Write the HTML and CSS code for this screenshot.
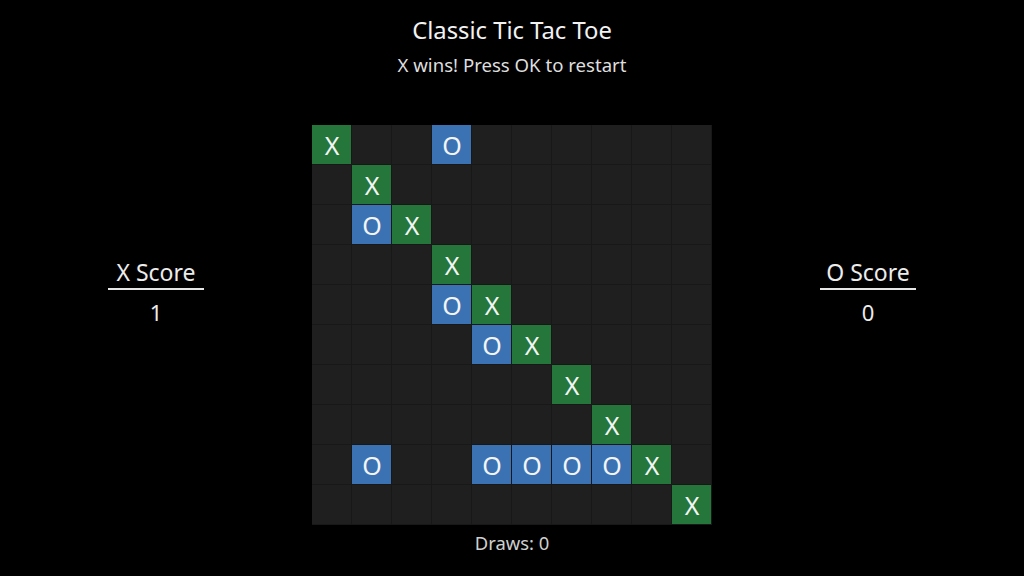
FILE: index.html
```html
<!DOCTYPE html>
<html lang="en">
<head>
<meta charset="utf-8">
<title>Classic Tic Tac Toe</title>
<link rel="stylesheet" href="styles.css">
</head>
<body>
<div class="page">
  <header class="header">
    <h1 class="title">Classic Tic Tac Toe</h1>
    <p class="status">X wins! Press OK to restart</p>
  </header>
  <main class="game">
    <section class="score">
      <div class="score-label">X Score</div>
      <div class="score-value">1</div>
    </section>
    <div class="board-wrap">
      <div class="board">
        <div class="cell x">X</div><div class="cell"></div><div class="cell"></div><div class="cell o">O</div><div class="cell"></div><div class="cell"></div><div class="cell"></div><div class="cell"></div><div class="cell"></div><div class="cell"></div>
        <div class="cell"></div><div class="cell x">X</div><div class="cell"></div><div class="cell"></div><div class="cell"></div><div class="cell"></div><div class="cell"></div><div class="cell"></div><div class="cell"></div><div class="cell"></div>
        <div class="cell"></div><div class="cell o">O</div><div class="cell x">X</div><div class="cell"></div><div class="cell"></div><div class="cell"></div><div class="cell"></div><div class="cell"></div><div class="cell"></div><div class="cell"></div>
        <div class="cell"></div><div class="cell"></div><div class="cell"></div><div class="cell x">X</div><div class="cell"></div><div class="cell"></div><div class="cell"></div><div class="cell"></div><div class="cell"></div><div class="cell"></div>
        <div class="cell"></div><div class="cell"></div><div class="cell"></div><div class="cell o">O</div><div class="cell x">X</div><div class="cell"></div><div class="cell"></div><div class="cell"></div><div class="cell"></div><div class="cell"></div>
        <div class="cell"></div><div class="cell"></div><div class="cell"></div><div class="cell"></div><div class="cell o">O</div><div class="cell x">X</div><div class="cell"></div><div class="cell"></div><div class="cell"></div><div class="cell"></div>
        <div class="cell"></div><div class="cell"></div><div class="cell"></div><div class="cell"></div><div class="cell"></div><div class="cell"></div><div class="cell x">X</div><div class="cell"></div><div class="cell"></div><div class="cell"></div>
        <div class="cell"></div><div class="cell"></div><div class="cell"></div><div class="cell"></div><div class="cell"></div><div class="cell"></div><div class="cell"></div><div class="cell x">X</div><div class="cell"></div><div class="cell"></div>
        <div class="cell"></div><div class="cell o">O</div><div class="cell"></div><div class="cell"></div><div class="cell o">O</div><div class="cell o">O</div><div class="cell o">O</div><div class="cell o">O</div><div class="cell x">X</div><div class="cell"></div>
        <div class="cell"></div><div class="cell"></div><div class="cell"></div><div class="cell"></div><div class="cell"></div><div class="cell"></div><div class="cell"></div><div class="cell"></div><div class="cell"></div><div class="cell x">X</div>
      </div>
      <div class="draws">Draws: 0</div>
    </div>
    <section class="score">
      <div class="score-label">O Score</div>
      <div class="score-value">0</div>
    </section>
  </main>
</div>
</body>
</html>
```
FILE: styles.css
```css
html, body {
  margin: 0;
  padding: 0;
  background: #000;
}
body {
  width: 1024px;
  height: 576px;
  overflow: hidden;
  font-family: "Noto Sans", "Open Sans", sans-serif;
  color: #ececec;
}
.page {
  display: flex;
  flex-direction: column;
  align-items: center;
}
.header {
  display: flex;
  flex-direction: column;
  align-items: center;
  padding-top: 15px;
}
.title {
  margin: 0;
  font-size: 23.8px;
  font-weight: 400;
  line-height: 30px;
  color: #f2f2f2;
}
.status {
  margin: 8px 0 0;
  font-size: 18.6px;
  line-height: 24px;
  color: #dedede;
}
.game {
  margin-top: 48px;
  display: flex;
  align-items: flex-start;
  justify-content: center;
  gap: 108px;
}
.score {
  width: 96px;
  margin-top: 133px;
  display: flex;
  flex-direction: column;
  align-items: center;
}
.score-label {
  font-size: 23px;
  line-height: 28px;
  width: 100%;
  text-align: center;
  white-space: nowrap;
  padding-bottom: 2px;
  border-bottom: 2px solid #e6e6e6;
}
.score-value {
  margin-top: 8px;
  font-size: 22px;
  line-height: 28px;
}
.board-wrap {
  display: flex;
  flex-direction: column;
  align-items: center;
}
.board {
  display: grid;
  grid-template-columns: repeat(10, 40px);
  grid-template-rows: repeat(10, 40px);
  background: #1f1f1f;
}
.cell {
  box-shadow: inset -1px -1px 0 #181818;
  display: flex;
  align-items: center;
  justify-content: center;
  font-size: 25px;
  color: #f4f4f4;
}
.cell.x {
  background: #24763a;
}
.cell.o {
  background: #3a72b3;
}
.draws {
  margin-top: 6px;
  font-size: 18.4px;
  line-height: 24px;
  color: #cfcfcf;
}
```
